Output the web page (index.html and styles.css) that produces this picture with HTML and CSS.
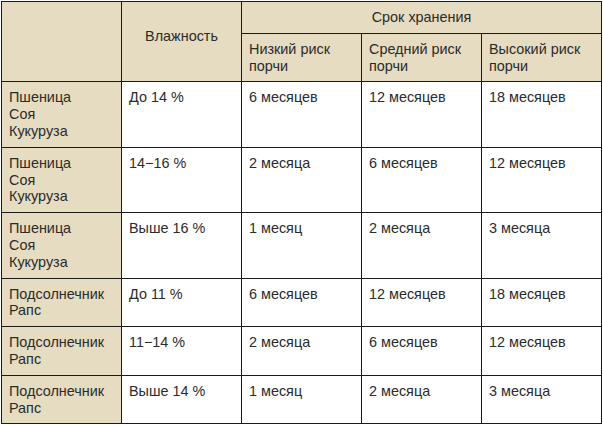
FILE: index.html
```html
<!DOCTYPE html>
<html lang="ru">
<head>
<meta charset="utf-8">
<title>Сроки хранения</title>
<link rel="stylesheet" href="styles.css">
</head>
<body>
<table class="storage">
  <colgroup>
    <col class="c"><col class="c"><col class="c"><col class="c"><col class="c">
  </colgroup>
  <thead>
    <tr>
      <th class="blank" rowspan="2"></th>
      <th class="hum" rowspan="2">Влажность</th>
      <th class="span" colspan="3">Срок хранения</th>
    </tr>
    <tr>
      <th class="sub">Низкий риск<br>порчи</th>
      <th class="sub">Средний риск<br>порчи</th>
      <th class="sub">Высокий риск<br>порчи</th>
    </tr>
  </thead>
  <tbody>
    <tr>
      <th class="crop">Пшеница<br>Соя<br>Кукуруза</th>
      <td>До 14 %</td><td>6 месяцев</td><td>12 месяцев</td><td>18 месяцев</td>
    </tr>
    <tr>
      <th class="crop">Пшеница<br>Соя<br>Кукуруза</th>
      <td>14−16 %</td><td>2 месяца</td><td>6 месяцев</td><td>12 месяцев</td>
    </tr>
    <tr>
      <th class="crop">Пшеница<br>Соя<br>Кукуруза</th>
      <td>Выше 16 %</td><td>1 месяц</td><td>2 месяца</td><td>3 месяца</td>
    </tr>
    <tr>
      <th class="crop">Подсолнечник<br>Рапс</th>
      <td>До 11 %</td><td>6 месяцев</td><td>12 месяцев</td><td>18 месяцев</td>
    </tr>
    <tr>
      <th class="crop">Подсолнечник<br>Рапс</th>
      <td>11−14 %</td><td>2 месяца</td><td>6 месяцев</td><td>12 месяцев</td>
    </tr>
    <tr>
      <th class="crop">Подсолнечник<br>Рапс</th>
      <td>Выше 14 %</td><td>1 месяц</td><td>2 месяца</td><td>3 месяца</td>
    </tr>
  </tbody>
</table>
</body>
</html>
```

FILE: styles.css
```css
html, body {
  margin: 0;
  padding: 0;
  background: #ffffff;
}
body {
  padding: 1px 0 0 1px;
  font-family: "Liberation Sans", Arial, sans-serif;
  font-size: 14.4px;
  color: #2b2b2b;
}
.storage {
  border-collapse: collapse;
  table-layout: fixed;
  width: 601px;
}
.storage .c {
  width: 120px;
}
.storage th,
.storage td {
  border: 1px solid #1a1a1a;
  padding: 7px 7px;
  line-height: 16.8px;
  font-weight: normal;
  text-align: left;
  vertical-align: top;
  background: #ffffff;
}
.storage thead th {
  background: #e6dcc1;
}
.storage th.crop {
  background: #e6dcc1;
}
.storage th.hum {
  text-align: center;
  vertical-align: middle;
  padding-bottom: 17px;
}
.storage th.span {
  text-align: center;
}
```
